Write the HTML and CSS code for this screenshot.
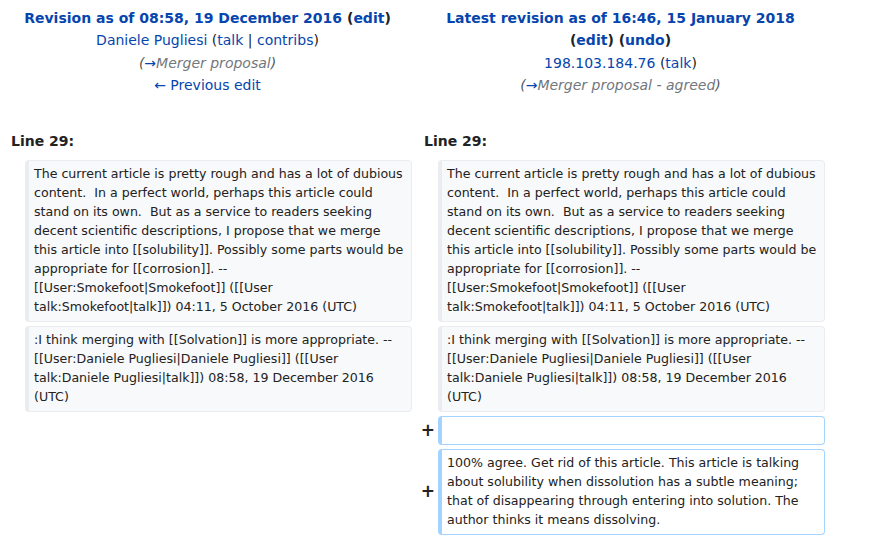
FILE: index.html
```html
<!DOCTYPE html>
<html lang="en">
<head>
<meta charset="utf-8">
<title>Diff</title>
<link rel="stylesheet" href="styles.css">
</head>
<body>
<div class="diff">
  <div class="title">
    <div><b><a href="#">Revision as of 08:58, 19 December 2016</a> (<a href="#">edit</a>)</b></div>
    <div><a href="#">Daniele Pugliesi</a> (<a href="#">talk</a> | <a href="#">contribs</a>)</div>
    <div class="comment">(<a href="#">→</a><span class="auto">Merger proposal</span>)</div>
    <div><a href="#">← Previous edit</a></div>
  </div>
  <div class="title">
    <div><b><a href="#">Latest revision as of 16:46, 15 January 2018</a> (<a href="#">edit</a>) (<a href="#">undo</a>)</b></div>
    <div><a href="#">198.103.184.76</a> (<a href="#">talk</a>)</div>
    <div class="comment">(<a href="#">→</a><span class="auto">Merger proposal - agreed</span>)</div>
  </div>

  <div class="lineno">Line 29:</div>
  <div class="lineno">Line 29:</div>

  <div class="marker"></div>
  <div class="line context">The current article is pretty rough and has a lot of dubious content.  In a perfect world, perhaps this article could stand on its own.  But as a service to readers seeking decent scientific descriptions, I propose that we merge this article into [[solubility]]. Possibly some parts would be appropriate for [[corrosion]]. -- [[User:Smokefoot|Smokefoot]] ([[User talk:Smokefoot|talk]]) 04:11, 5 October 2016 (UTC)</div>
  <div class="marker"></div>
  <div class="line context">The current article is pretty rough and has a lot of dubious content.  In a perfect world, perhaps this article could stand on its own.  But as a service to readers seeking decent scientific descriptions, I propose that we merge this article into [[solubility]]. Possibly some parts would be appropriate for [[corrosion]]. -- [[User:Smokefoot|Smokefoot]] ([[User talk:Smokefoot|talk]]) 04:11, 5 October 2016 (UTC)</div>

  <div class="marker"></div>
  <div class="line context">:I think merging with [[Solvation]] is more appropriate. -- [[User:Daniele Pugliesi|Daniele Pugliesi]] ([[User talk:Daniele Pugliesi|talk]]) 08:58, 19 December 2016 (UTC)</div>
  <div class="marker"></div>
  <div class="line context">:I think merging with [[Solvation]] is more appropriate. -- [[User:Daniele Pugliesi|Daniele Pugliesi]] ([[User talk:Daniele Pugliesi|talk]]) 08:58, 19 December 2016 (UTC)</div>

  <div class="empty"></div>
  <div class="empty"></div>
  <div class="marker">+</div>
  <div class="line added"><br></div>

  <div class="empty"></div>
  <div class="empty"></div>
  <div class="marker">+</div>
  <div class="line added">100% agree. Get rid of this article. This article is talking about solubility when dissolution has a subtle meaning; that of disappearing through entering into solution. The author thinks it means dissolving.</div>
</div>
</body>
</html>
```

FILE: styles.css
```css
html, body {
  margin: 0;
  padding: 0;
  background: #ffffff;
}

body {
  font-family: "DejaVu Sans", sans-serif;
  color: #222222;
}

a {
  color: #0645ad;
  text-decoration: none;
}

.diff {
  display: grid;
  grid-template-columns: 18px 387px 18px 387px;
  column-gap: 4px;
  row-gap: 4px;
  padding: 7px 0 0 3px;
}

.title {
  grid-column: span 2;
  text-align: center;
  font-size: 14px;
  line-height: 22.4px;
  padding: 0 8px 31px 8px;
}

.title b {
  font-weight: bold;
}

.comment {
  font-style: italic;
  color: #54595d;
}

.comment .auto {
  color: #72777d;
}

.lineno {
  grid-column: span 2;
  font-weight: bold;
  font-size: 14px;
  line-height: 19px;
  padding: 0 0 5px 8px;
}

.marker {
  display: flex;
  align-items: center;
  justify-content: flex-end;
  font-weight: bold;
  font-size: 17px;
  line-height: 19px;
  margin-right: -1px;
}

.line {
  font-size: 12.6px;
  line-height: 19px;
  white-space: pre-wrap;
  word-wrap: break-word;
  border-style: solid;
  border-width: 1px 1px 1px 4px;
  border-radius: 4px;
  padding: 3px 6px 5px 5px;
}

.context {
  background: #f8f9fa;
  border-color: #eaecf0;
}

.added {
  background: #ffffff;
  border-color: #a3d3ff;
}
```
